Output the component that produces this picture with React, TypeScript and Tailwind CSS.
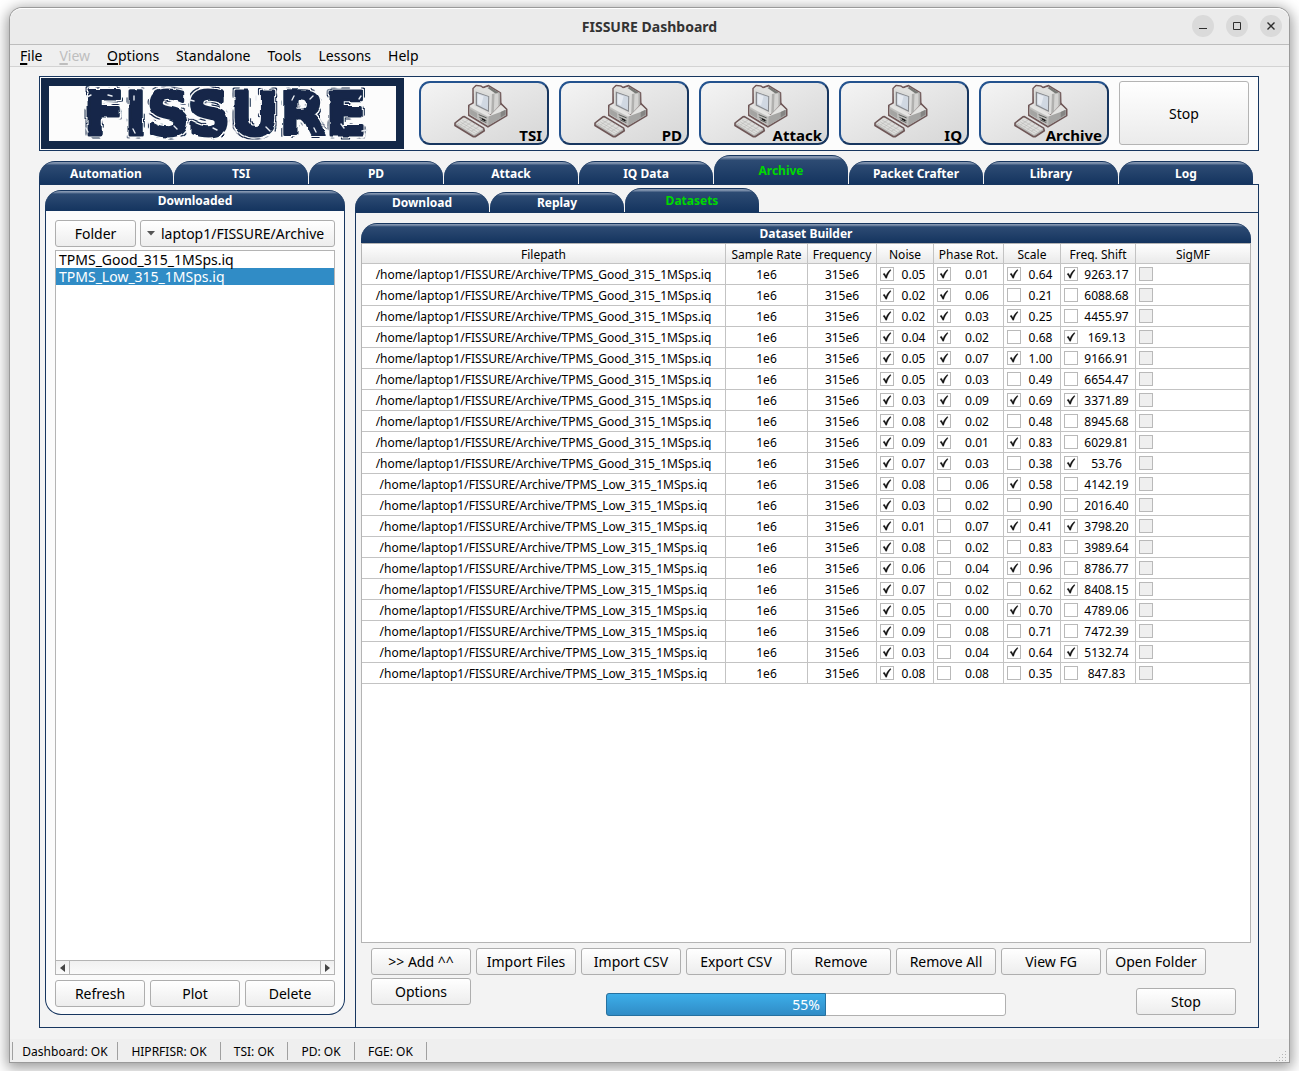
import React, { useState } from "react";

const MENU = [
  { label: "File", key: true },
  { label: "View", key: true, disabled: true },
  { label: "Options", key: true },
  { label: "Standalone" },
  { label: "Tools" },
  { label: "Lessons" },
  { label: "Help" },
];

const SYSTEMS = ["TSI", "PD", "Attack", "IQ", "Archive"];
const MAIN_TABS = ["Automation", "TSI", "PD", "Attack", "IQ Data", "Archive", "Packet Crafter", "Library", "Log"];
const SUB_TABS = ["Download", "Replay", "Datasets"];
const FILES = ["TPMS_Good_315_1MSps.iq", "TPMS_Low_315_1MSps.iq"];
const ACTIONS = [">> Add ^^", "Import Files", "Import CSV", "Export CSV", "Remove", "Remove All", "View FG", "Open Folder", "Options"];
const STATUS = [
  { text: "Dashboard: OK", width: "w-[105px]" },
  { text: "HIPRFISR: OK", width: "w-[103px]" },
  { text: "TSI: OK", width: "w-[67px]" },
  { text: "PD: OK", width: "w-[67px]" },
  { text: "FGE: OK", width: "w-[72px]" },
];
const HEADINGS = ["Filepath", "Sample Rate", "Frequency", "Noise", "Phase Rot.", "Scale", "Freq. Shift", "SigMF"];

type Cell = [boolean, string];
type Row = { file: string; noise: Cell; phase: Cell; scale: Cell; shift: Cell };

const row = (file: string, n: string, p: Cell, s: Cell, f: Cell): Row => ({
  file: `/home/laptop1/FISSURE/Archive/TPMS_${file}_315_1MSps.iq`,
  noise: [true, n],
  phase: p,
  scale: s,
  shift: f,
});

const ROWS: Row[] = [
  row("Good", "0.05", [true, "0.01"], [true, "0.64"], [true, "9263.17"]),
  row("Good", "0.02", [true, "0.06"], [false, "0.21"], [false, "6088.68"]),
  row("Good", "0.02", [true, "0.03"], [true, "0.25"], [false, "4455.97"]),
  row("Good", "0.04", [true, "0.02"], [false, "0.68"], [true, "169.13"]),
  row("Good", "0.05", [true, "0.07"], [true, "1.00"], [false, "9166.91"]),
  row("Good", "0.05", [true, "0.03"], [false, "0.49"], [false, "6654.47"]),
  row("Good", "0.03", [true, "0.09"], [true, "0.69"], [true, "3371.89"]),
  row("Good", "0.08", [true, "0.02"], [false, "0.48"], [false, "8945.68"]),
  row("Good", "0.09", [true, "0.01"], [true, "0.83"], [false, "6029.81"]),
  row("Good", "0.07", [true, "0.03"], [false, "0.38"], [true, "53.76"]),
  row("Low", "0.08", [false, "0.06"], [true, "0.58"], [false, "4142.19"]),
  row("Low", "0.03", [false, "0.02"], [false, "0.90"], [false, "2016.40"]),
  row("Low", "0.01", [false, "0.07"], [true, "0.41"], [true, "3798.20"]),
  row("Low", "0.08", [false, "0.02"], [false, "0.83"], [false, "3989.64"]),
  row("Low", "0.06", [false, "0.04"], [true, "0.96"], [false, "8786.77"]),
  row("Low", "0.07", [false, "0.02"], [false, "0.62"], [true, "8408.15"]),
  row("Low", "0.05", [false, "0.00"], [true, "0.70"], [false, "4789.06"]),
  row("Low", "0.09", [false, "0.08"], [false, "0.71"], [false, "7472.39"]),
  row("Low", "0.03", [false, "0.04"], [true, "0.64"], [true, "5132.74"]),
  row("Low", "0.08", [false, "0.08"], [false, "0.35"], [false, "847.83"]),
];

const NAVY_BAR = "border-t border-[#17365f] bg-linear-to-b from-[#8496b0] from-5% via-[#2d4b73] via-15% to-[#14345f]";

function Logo() {
  return (
    <svg viewBox="0 0 363 71" className="h-[71px] w-[363px] shrink-0" role="img" aria-label="FISSURE logo">
      <defs>
        {/* Roughens the lettering and adds a broken hairline around it. */}
        <filter id="rough" x="-5%" y="-10%" width="110%" height="120%">
          <feTurbulence type="fractalNoise" baseFrequency="0.1" numOctaves="1" seed="4" result="noise" />
          <feDisplacementMap in="SourceGraphic" in2="noise" scale="4" xChannelSelector="R" yChannelSelector="G" result="letters" />
          <feMorphology in="letters" operator="dilate" radius="2" result="wide" />
          <feMorphology in="letters" operator="dilate" radius="1" result="near" />
          <feComposite in="wide" in2="near" operator="out" result="ring" />
          <feColorMatrix in="noise" type="matrix" values="0 0 0 0 0  0 0 0 0 0  0 0 0 0 0  0 0 14 0 -7" result="mask" />
          <feComposite in="ring" in2="mask" operator="in" result="fringe" />
          <feMerge>
            <feMergeNode in="fringe" />
            <feMergeNode in="letters" />
          </feMerge>
        </filter>
      </defs>
      <rect x="4" y="4" width="355" height="63" fill="#fcfcfc" stroke="#132848" strokeWidth="8" />
      <text
        x="184"
        y="57"
        textAnchor="middle"
        fontFamily="DejaVu Sans"
        fontWeight="700"
        fontSize="60"
        fill="#132848"
        stroke="#132848"
        strokeWidth="3"
        strokeLinejoin="round"
        filter="url(#rough)"
      >
        FISSURE
      </text>
      <g fill="none" stroke="#e8ecf2" strokeWidth="1.400" strokeLinecap="round">
        <path d="M46 19l4-2M45 50l2 4M67 17l4 1M93 18v4M92 51l2 4M133 48l3 3M149 22l4 1M172 50l4 2M215 18v4M225 49l4 4M253 18l-2 4M272 18l-3 3M273 50l2 4M300 46l3 4M320 18l-2 3M321 53l5-1" />
      </g>
    </svg>
  );
}

function ComputerIcon() {
  return (
    <svg viewBox="130 44 164 162" className="h-[54px] w-[54px]" aria-hidden="true">
      <g strokeLinejoin="round" stroke="#6f5757" strokeWidth="5">
        <path d="M133 162l24-19 5-1 58 35 2 8-28 18h-5l-56-34z" fill="#b8b8b6" />
        <path d="M175 108l16-9 80 2 19 19v19l-57 34-58-35z" fill="#cfcfcd" />
        <path d="M188 57l9-9 14 1 7 5 17-6 36 22 1 37-28 29-5 2-51-27z" fill="#d9d9d7" />
      </g>
      <path d="M136 162l24-17 58 34-27 18z" fill="#dededc" />
      <path d="M142 162l53 31M149 158l52 31M155 153l53 31M149 168l24-16M160 174l24-16M171 181l24-17M182 187l25-16" stroke="#b2b2b0" strokeWidth="1.6" fill="none" />
      <path d="M177 110l15-9 49 36 31-31 16 15-55 32z" fill="#e4e4e2" />
      <path d="M177 113l56 29v28l-56-35z" fill="#bebebc" />
      <path d="M234 142l54-20v16l-54 32z" fill="#a6a6a4" />
      <path d="M272 128l14-7v15l-14 9z" fill="#858583" />
      <path d="M179 119l21 12v16l-21-12z" fill="#a4a4a2" />
      <path d="M205 136l24 10M207 144l22 11M210 152l18 8" stroke="#555753" strokeWidth="3" fill="none" />
      <path d="M215 149l10 5" stroke="#111" strokeWidth="4" />
      <path d="M190 57l8-7 13 1 7 6 17-6 34 20-24 7z" fill="#e0e0de" />
      <path d="M232 55l6-4 27 17-7 5z" fill="#777975" />
      <path d="M245 73l25-4v37l-27 29z" fill="#b0b0ae" />
      <path d="M253 74l12-3v39l-14 15z" fill="#d4d4d2" />
      <path d="M190 57l54 17-2 61-51-26z" fill="#dcdcda" />
      <path d="M196 66l41 14-1 48-40-20z" fill="#85878b" />
      <path d="M200 70l34 12-1 41-33-17z" fill="#d0d8e2" />
      <path d="M202 73l18 7-8 28-10-5z" fill="#e6eaf0" />
    </svg>
  );
}

function PushButton({ children, className = "" }: { children: React.ReactNode; className?: string }) {
  return (
    <button
      type="button"
      className={`h-[27px] rounded-[3px] border border-[#aeaeae] bg-linear-to-b from-white to-[#ededed] text-center text-[14px] leading-5 whitespace-nowrap ${className}`}
    >
      {children}
    </button>
  );
}

function TabBar({ tabs, initial, width, height, activeHeight }: { tabs: string[]; initial: string; width: string; height: string; activeHeight: string }) {
  const [active, setActive] = useState(initial);
  return (
    <div role="tablist" className="flex items-end gap-px">
      {tabs.map((tab) => (
        <button
          key={tab}
          type="button"
          role="tab"
          aria-selected={tab === active}
          onClick={() => setActive(tab)}
          className={`rounded-t-[16px] text-[12px] leading-4 font-bold whitespace-nowrap ${NAVY_BAR} ${width} ${
            tab === active ? `${activeHeight} text-[#00d800]` : `${height} text-white`
          }`}
        >
          {tab}
        </button>
      ))}
    </div>
  );
}

function Tick({ checked, label, disabled = false }: { checked: boolean; label: string; disabled?: boolean }) {
  const [on, setOn] = useState(checked);
  return (
    <span className="ml-[3px] grid size-[14px] shrink-0">
      <input
        type="checkbox"
        aria-label={label}
        checked={on}
        disabled={disabled}
        onChange={() => setOn(!on)}
        className="col-start-1 row-start-1 size-[14px] appearance-none border border-[#b9b9b9] bg-white disabled:bg-[#efefef]"
      />
      {on && (
        <svg viewBox="0 0 14 14" className="pointer-events-none col-start-1 row-start-1 size-[14px]" aria-hidden="true">
          <path d="M3 7L4.500 6.200L6 8.800C6.800 6.200 8.400 4 10.400 2.600L11 3.200C8.900 5.600 7.500 8 6.700 11.200H5.700C5 9.600 4.200 8.200 3 7z" fill="#111" stroke="#111" strokeWidth="0.300" />
        </svg>
      )}
    </span>
  );
}

function TickCell({ cell, label }: { cell: Cell; label: string }) {
  return (
    <td className="border-r border-b border-[#c3c3c3] p-0">
      <div className="flex h-5 items-center">
        <Tick checked={cell[0]} label={label} />
        <span className="flex-1 pt-px text-center">{cell[1]}</span>
      </div>
    </td>
  );
}

function DatasetTable() {
  return (
    <div className="min-h-0 flex-1 border border-[#b4b4b4] bg-white">
      <table className="w-full table-fixed border-separate border-spacing-0 text-[12px] leading-[19px]">
        <colgroup>
          <col className="w-[364px]" />
          <col className="w-[82px]" />
          <col className="w-[69px]" />
          <col className="w-[57px]" />
          <col className="w-[70px]" />
          <col className="w-[57px]" />
          <col className="w-[75px]" />
          <col />
        </colgroup>
        <thead>
          <tr>
            {HEADINGS.map((h) => (
              <th key={h} scope="col" className="h-5 border-r border-b border-[#c3c3c3] bg-linear-to-b from-white to-[#eaeaea] p-0 pt-[2px] leading-[17px] font-normal whitespace-nowrap last:border-r-0">
                {h}
              </th>
            ))}
          </tr>
        </thead>
        <tbody>
          {ROWS.map((r, i) => (
            <tr key={i}>
              <td className="border-r border-b border-[#c3c3c3] p-0 pt-px text-center whitespace-nowrap">{r.file}</td>
              <td className="border-r border-b border-[#c3c3c3] p-0 pt-px text-center">1e6</td>
              <td className="border-r border-b border-[#c3c3c3] p-0 pt-px text-center">315e6</td>
              <TickCell cell={r.noise} label={`Noise, row ${i + 1}`} />
              <TickCell cell={r.phase} label={`Phase rotation, row ${i + 1}`} />
              <TickCell cell={r.scale} label={`Scale, row ${i + 1}`} />
              <TickCell cell={r.shift} label={`Frequency shift, row ${i + 1}`} />
              <td className="border-r border-b border-[#c3c3c3] p-0">
                <div className="flex h-5 items-center">
                  <Tick checked={false} disabled label={`SigMF, row ${i + 1}`} />
                </div>
              </td>
            </tr>
          ))}
        </tbody>
      </table>
    </div>
  );
}

function DownloadedPanel() {
  const [selected, setSelected] = useState(FILES[1]);
  return (
    <section className="mt-[5px] mb-3 ml-[5px] flex w-[300px] shrink-0 flex-col">
      <h2 className={`h-[21px] rounded-t-[16px] text-center text-[12px] leading-[19px] font-bold text-white ${NAVY_BAR}`}>Downloaded</h2>
      <div className="flex flex-1 flex-col rounded-b-[16px] border border-t-0 border-[#17365f] bg-[#fbfbfb] px-[9px] pt-[9px] pb-[7px]">
        <div className="flex gap-1">
          <PushButton className="w-[81px]">Folder</PushButton>
          <div className="relative flex-1">
            <select
              aria-label="Archive folder"
              className="h-[27px] w-full appearance-none rounded-[3px] border border-[#aeaeae] bg-linear-to-b from-white to-[#ededed] pl-5 text-[14px] leading-5"
            >
              <option>laptop1/FISSURE/Archive</option>
            </select>
            <svg viewBox="0 0 8 5" className="pointer-events-none absolute top-[11px] left-[7px] h-[5px] w-2" aria-hidden="true">
              <path d="M0 0h8L4 4.500z" fill="#555" />
            </svg>
          </div>
        </div>
        <div className="mt-[3px] flex flex-1 flex-col border border-[#b4b4b4] bg-white">
          <ul role="listbox" aria-label="Downloaded files" className="flex-1 text-[14px] leading-[17px]">
            {FILES.map((f) => (
              <li
                key={f}
                role="option"
                aria-selected={f === selected}
                onClick={() => setSelected(f)}
                className={f === selected ? "bg-[#308cc6] px-[3px] text-white" : "px-[3px]"}
              >
                {f}
              </li>
            ))}
          </ul>
          <div className="flex h-[14px] border-t border-[#b4b4b4] bg-linear-to-b from-[#f0f0f0] to-[#fafafa]">
            <button type="button" aria-label="Scroll left" className="grid w-[14px] place-items-center border-r border-[#b4b4b4]">
              <svg viewBox="0 0 5 8" className="h-2 w-[5px]"><path d="M5 0v8L0 4z" fill="#444" /></svg>
            </button>
            <div className="flex-1" />
            <button type="button" aria-label="Scroll right" className="grid w-[14px] place-items-center border-l border-[#b4b4b4]">
              <svg viewBox="0 0 5 8" className="h-2 w-[5px]"><path d="M0 0v8l5-4z" fill="#444" /></svg>
            </button>
          </div>
        </div>
        <div className="mt-[5px] flex gap-[5px]">
          <PushButton className="flex-1">Refresh</PushButton>
          <PushButton className="flex-1">Plot</PushButton>
          <PushButton className="flex-1">Delete</PushButton>
        </div>
      </div>
    </section>
  );
}

function WindowButton({ label, children }: { label: string; children: React.ReactNode }) {
  return (
    <button type="button" aria-label={label} className="grid size-[22px] place-items-center rounded-full bg-[#dadada]">
      <svg viewBox="0 0 10 10" className="size-[10px]" fill="none" stroke="#2e2e2e" strokeWidth="1">
        {children}
      </svg>
    </button>
  );
}

export default function App() {
  return (
    <div className="flex min-h-screen flex-col bg-white px-[10px] pt-2 pb-[9px] font-['Noto_Sans',sans-serif] text-black">
      <div className="flex flex-1 flex-col rounded-t-[12px] bg-[#f3f3f3] shadow-[0_0_0_1px_#9a9a9a,0_3px_14px_3px_rgba(0,0,0,0.4)]">
        <header className="grid h-[37px] grid-cols-[1fr_auto_1fr] items-center rounded-t-[12px] border-t border-b border-t-white border-b-[#bdbdbd] bg-[#ebebeb]">
          <h1 className="col-start-2 text-[14px] leading-5 font-bold text-[#333]">FISSURE Dashboard</h1>
          <div className="flex justify-end gap-3 pr-[7px] pb-px">
            <WindowButton label="Minimize"><path d="M1 7.500h8" /></WindowButton>
            <WindowButton label="Maximize"><path d="M1.500 1.500h7v7h-7z" /></WindowButton>
            <WindowButton label="Close"><path d="M1.500 1.500l7 7M8.500 1.500l-7 7" strokeWidth="1.400" /></WindowButton>
          </div>
        </header>

        <nav className="flex h-[22px] items-center gap-[17px] border-b border-[#d3d3d3] bg-[#efefef] pl-[10px] text-[14px] leading-5">
          {MENU.map((m) => (
            <button key={m.label} type="button" disabled={m.disabled} className="disabled:text-[#bebebe]">
              {m.key ? <span className="underline decoration-2 underline-offset-2">{m.label[0]}</span> : m.label[0]}
              {m.label.slice(1)}
            </button>
          ))}
        </nav>

        <main className="mx-[29px] mt-[9px] flex flex-1 flex-col pr-px">
          <div className="flex h-[75px] items-start border border-[#17365f] bg-[#fcfcfc] pt-px pr-[9px] pl-px">
            <Logo />
            <div className="mt-[3px] ml-[15px] grid flex-1 grid-cols-6 gap-[10px]">
              {SYSTEMS.map((s) => (
                <button
                  key={s}
                  type="button"
                  className="relative flex h-16 justify-center rounded-[11px] border-2 border-t-[#24538f] border-r-[#17365f] border-b-[#17365f] border-l-[#24538f] bg-linear-to-br from-[#f4f4f4] to-[#d6d6d6] pt-px pr-[6px]"
                >
                  <ComputerIcon />
                  <span className="absolute right-[5px] bottom-[-2px] text-[15px] leading-5 font-bold">{s}</span>
                </button>
              ))}
              <button type="button" className="h-16 rounded-[3px] border border-[#b4b4b4] bg-linear-to-b from-white to-[#ebebeb] pt-[2px] text-[14px] leading-5">
                Stop
              </button>
            </div>
          </div>

          <div className="mt-1 pr-[6px]">
            <TabBar tabs={MAIN_TABS} initial="Archive" width="min-w-0 flex-1 pt-px" height="h-[23px]" activeHeight="h-[29px]" />
          </div>

          <div className="flex flex-1 border border-[#17365f]">
            <DownloadedPanel />
            <section className="ml-[10px] flex min-w-0 flex-1 flex-col pt-[3px]">
              <TabBar tabs={SUB_TABS} initial="Datasets" width="w-[134px]" height="h-5" activeHeight="h-6" />
              <div className="flex flex-1 flex-col border-t border-l border-[#17365f] pt-[10px] pr-[7px] pb-[11px] pl-[5px]">
                <h2 className={`h-5 rounded-t-[16px] text-center text-[12px] leading-[19px] font-bold text-white ${NAVY_BAR}`}>Dataset Builder</h2>
                <DatasetTable />
                <div className="mt-[5px] flex flex-wrap gap-x-[5px] gap-y-[3px] pl-[10px]">
                  {ACTIONS.slice(0, 8).map((a) => (
                    <PushButton key={a} className="w-[100px]">{a}</PushButton>
                  ))}
                </div>
                <div className="mt-[3px] flex items-start pr-[15px] pl-[10px]">
                  <PushButton className="w-[100px]">{ACTIONS[8]}</PushButton>
                  <div
                    role="progressbar"
                    aria-label="Dataset progress"
                    aria-valuenow={55}
                    aria-valuemin={0}
                    aria-valuemax={100}
                    className="mt-[15px] mr-auto ml-[135px] flex h-[23px] w-[400px] rounded-[3px] border border-[#b0b0b0] bg-white"
                  >
                    <div className="-m-px w-[220px] rounded-l-[3px] border border-[#2571a0] bg-linear-to-b from-[#3daee9] to-[#308cc6] pr-[5px] text-right text-[14px] leading-[21px] text-white">
                      55%
                    </div>
                  </div>
                  <PushButton className="mt-[10px] w-[100px]">Stop</PushButton>
                </div>
              </div>
            </section>
          </div>
        </main>

        <footer className="mt-[11px] flex h-[23px] items-center bg-[#efefef] pl-[2px] text-[12px] leading-4">
          {STATUS.map((s) => (
            <div key={s.text} className={`flex h-[18px] items-center justify-center border-l border-[#a0a0a0] pt-[2px] whitespace-nowrap ${s.width}`}>
              {s.text}
            </div>
          ))}
          <div className="h-[18px] border-l border-[#a0a0a0]" />
          <svg viewBox="0 0 12 12" className="mr-px ml-auto size-3 self-end" aria-hidden="true" fill="#b5b5b5">
            <path d="M9 1h1v1H9zM9 4h1v1H9zM6 4h1v1H6zM9 7h1v1H9zM6 7h1v1H6zM3 7h1v1H3zM9 10h1v1H9zM6 10h1v1H6zM3 10h1v1H3zM0 10h1v1H0z" />
          </svg>
        </footer>
      </div>
    </div>
  );
}
